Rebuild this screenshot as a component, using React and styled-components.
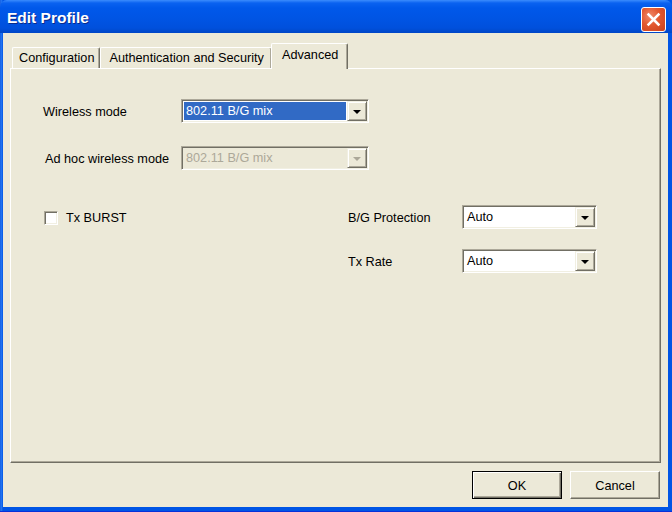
import React from "react";
import styled, { createGlobalStyle } from "styled-components";

const GlobalStyle = createGlobalStyle`
  html, body {
    margin: 0;
    padding: 0;
    background: #0055e5;
  }
  body {
    font-family: "Liberation Sans", Arial, sans-serif;
    font-size: 12.7px;
    color: #000000;
  }
`;

const App = () => {
  return (
    <>
      <GlobalStyle />
      <Window>
        <TitleBar>
          <Title>Edit Profile</Title>
          <CloseButton aria-label="Close">
            <svg width="15" height="15" viewBox="0 0 15 15">
              <path
                d="M2.5 2.5 L12.5 12.5 M12.5 2.5 L2.5 12.5"
                stroke="#ffffff"
                strokeWidth="2.5"
                strokeLinecap="square"
              />
            </svg>
          </CloseButton>
        </TitleBar>

        <Body>
          <TabStrip>
            <Tab $pad={5}>Configuration</Tab>
            <Tab $pad={7}>Authentication and Security</Tab>
            <Tab $pad={9} $active>
              Advanced
            </Tab>
          </TabStrip>

          <TabPanel>
            <ModeGrid>
              <Label>Wireless mode</Label>
              <Combo $width={188}>
                <Field $selected>802.11 B/G mix</Field>
                <Arrow>
                  <Triangle />
                </Arrow>
              </Combo>
              <Label $shift={2}>Ad hoc wireless mode</Label>
              <Combo $width={188} $disabled>
                <Field $disabled>802.11 B/G mix</Field>
                <Arrow>
                  <Triangle $disabled />
                </Arrow>
              </Combo>
            </ModeGrid>

            <LowerRow>
              <CheckRow>
                <CheckBox />
                <span>Tx BURST</span>
              </CheckRow>

              <OptionGrid>
                <Label>B/G Protection</Label>
                <Combo $width={135}>
                  <Field>Auto</Field>
                  <Arrow>
                    <Triangle />
                  </Arrow>
                </Combo>
                <Label>Tx Rate</Label>
                <Combo $width={135}>
                  <Field>Auto</Field>
                  <Arrow>
                    <Triangle />
                  </Arrow>
                </Combo>
              </OptionGrid>
            </LowerRow>
          </TabPanel>

          <ButtonRow>
            <PushButton $default>OK</PushButton>
            <PushButton>Cancel</PushButton>
          </ButtonRow>
        </Body>
      </Window>
    </>
  );
};

// Styled Components
const Window = styled.div`
  width: 672px;
  height: 512px;
  display: flex;
  flex-direction: column;
  box-sizing: border-box;
  background: linear-gradient(to right, #0a4fd8 0px, #2a7cf5 1px, #0055e5 3px);
  padding: 0 4px 4px 3px;
  border-bottom: 1px solid #0831d9;
  overflow: hidden;
`;

const TitleBar = styled.div`
  height: 33px;
  flex: none;
  display: flex;
  align-items: center;
  justify-content: space-between;
  margin: 0 -4px 0 -3px;
  padding: 0 6px 0 7px;
  border-radius: 7px 7px 0 0;
  background: linear-gradient(
    to bottom,
    #3b8cfd 0px,
    #0a62f0 3px,
    #0058ea 8px,
    #0054e3 20px,
    #0050dc 28px,
    #0046c6 33px
  );
`;

const Title = styled.div`
  color: #ffffff;
  font-family: "Liberation Sans", Arial, sans-serif;
  font-weight: bold;
  font-size: 15.5px;
  text-shadow: 1px 1px 0 #0a2a8a;
  padding-top: 2px;
`;

const CloseButton = styled.div`
  width: 23px;
  height: 23px;
  display: flex;
  align-items: center;
  justify-content: center;
  border: 1px solid #ffffff;
  border-radius: 3px;
  background: radial-gradient(
    circle at 35% 35%,
    #f08a6a 0%,
    #e2572f 45%,
    #c9401c 100%
  );
  margin-top: 5px;
`;

const Body = styled.div`
  flex: 1;
  display: flex;
  flex-direction: column;
  background: #ece9d8;
  padding: 10px 7px 8px 7px;
  min-height: 0;
`;

const TabStrip = styled.div`
  display: flex;
  align-items: flex-end;
  height: 25px;
  padding-left: 2px;
  position: relative;
  z-index: 1;
`;

const Tab = styled.div`
  box-sizing: border-box;
  height: ${(props) => (props.$active ? "26px" : "21px")};
  padding: ${(props) => (props.$active ? "3px" : "2px")} ${(props) => props.$pad}px 0
    ${(props) => props.$pad + 1}px;
  margin: ${(props) => (props.$active ? "0 0 -1px -1px" : "0")};
  background: #ece9d8;
  border-top: 1px solid #ffffff;
  border-left: 1px solid #ffffff;
  border-right: 1px solid #716f64;
  box-shadow: inset -1px 0 0 #aca899;
  border-radius: 2px 2px 0 0;
  white-space: nowrap;
  line-height: 16px;
`;

const TabPanel = styled.div`
  flex: 1;
  display: flex;
  flex-direction: column;
  box-sizing: border-box;
  border-top: 1px solid #ffffff;
  border-left: 1px solid #ffffff;
  border-right: 1px solid #716f64;
  border-bottom: 1px solid #716f64;
  box-shadow: inset -1px -1px 0 #aca899;
  padding: 30px 0 0 32px;
  margin-bottom: 1px;
`;

const ModeGrid = styled.div`
  display: grid;
  grid-template-columns: 138px auto;
  row-gap: 23px;
  align-items: center;
  justify-content: start;
`;

const Label = styled.div`
  padding-left: ${(props) => props.$shift || 0}px;
  padding-top: 2px;
  white-space: nowrap;
`;

const Combo = styled.div`
  width: ${(props) => props.$width}px;
  height: 24px;
  box-sizing: border-box;
  display: flex;
  align-items: stretch;
  padding: 1px;
  background: ${(props) => (props.$disabled ? "#ece9d8" : "#ffffff")};
  border: 1px solid;
  border-color: #aca899 #ffffff #ffffff #aca899;
  box-shadow: inset 1px 1px 0 #716f64, inset -1px -1px 0 #f1efe2;
`;

const Field = styled.div`
  flex: 1;
  margin: 1px;
  padding-left: 2px;
  display: flex;
  align-items: center;
  background: ${(props) => (props.$selected ? "#316ac5" : "transparent")};
  color: ${(props) =>
    props.$selected ? "#ffffff" : props.$disabled ? "#aca899" : "#000000"};
  white-space: nowrap;
`;

const Arrow = styled.div`
  width: 20px;
  flex: none;
  display: flex;
  align-items: center;
  justify-content: center;
  background: #ece9d8;
  box-sizing: border-box;
  border: 1px solid;
  border-color: #f1efe2 #716f64 #716f64 #f1efe2;
  box-shadow: inset 1px 1px 0 #ffffff, inset -1px -1px 0 #aca899;
`;

const Triangle = styled.div`
  width: 0;
  height: 0;
  border-left: 4px solid transparent;
  border-right: 4px solid transparent;
  border-top: 4px solid ${(props) => (props.$disabled ? "#aca899" : "#000000")};
  margin-top: 1px;
`;

const LowerRow = styled.div`
  display: flex;
  align-items: flex-start;
  margin-top: 35px;
`;

const CheckRow = styled.div`
  width: 304px;
  display: flex;
  align-items: center;
  gap: 8px;
  padding-top: 6px;
  padding-left: 1px;
`;

const CheckBox = styled.div`
  width: 14px;
  height: 14px;
  box-sizing: border-box;
  background: #ffffff;
  border: 1px solid;
  border-color: #aca899 #ffffff #ffffff #aca899;
  box-shadow: inset 1px 1px 0 #716f64, inset -1px -1px 0 #f1efe2;
`;

const OptionGrid = styled.div`
  display: grid;
  grid-template-columns: 114px auto;
  row-gap: 20px;
  align-items: center;
`;

const ButtonRow = styled.div`
  display: flex;
  justify-content: flex-end;
  gap: 8px;
  margin-top: 7px;
  padding-right: 1px;
`;

const PushButton = styled.div`
  width: 90px;
  height: 28px;
  box-sizing: border-box;
  display: flex;
  align-items: center;
  justify-content: center;
  background: #ece9d8;
  border: 1px solid;
  border-color: ${(props) =>
    props.$default ? "#000000" : "#ffffff #716f64 #716f64 #ffffff"};
  box-shadow: ${(props) =>
    props.$default
      ? "inset 1px 1px 0 #ffffff, inset -1px -1px 0 #716f64, inset -2px -2px 0 #aca899"
      : "inset -1px -1px 0 #aca899"};
  padding-top: 1px;
`;

export default App;
